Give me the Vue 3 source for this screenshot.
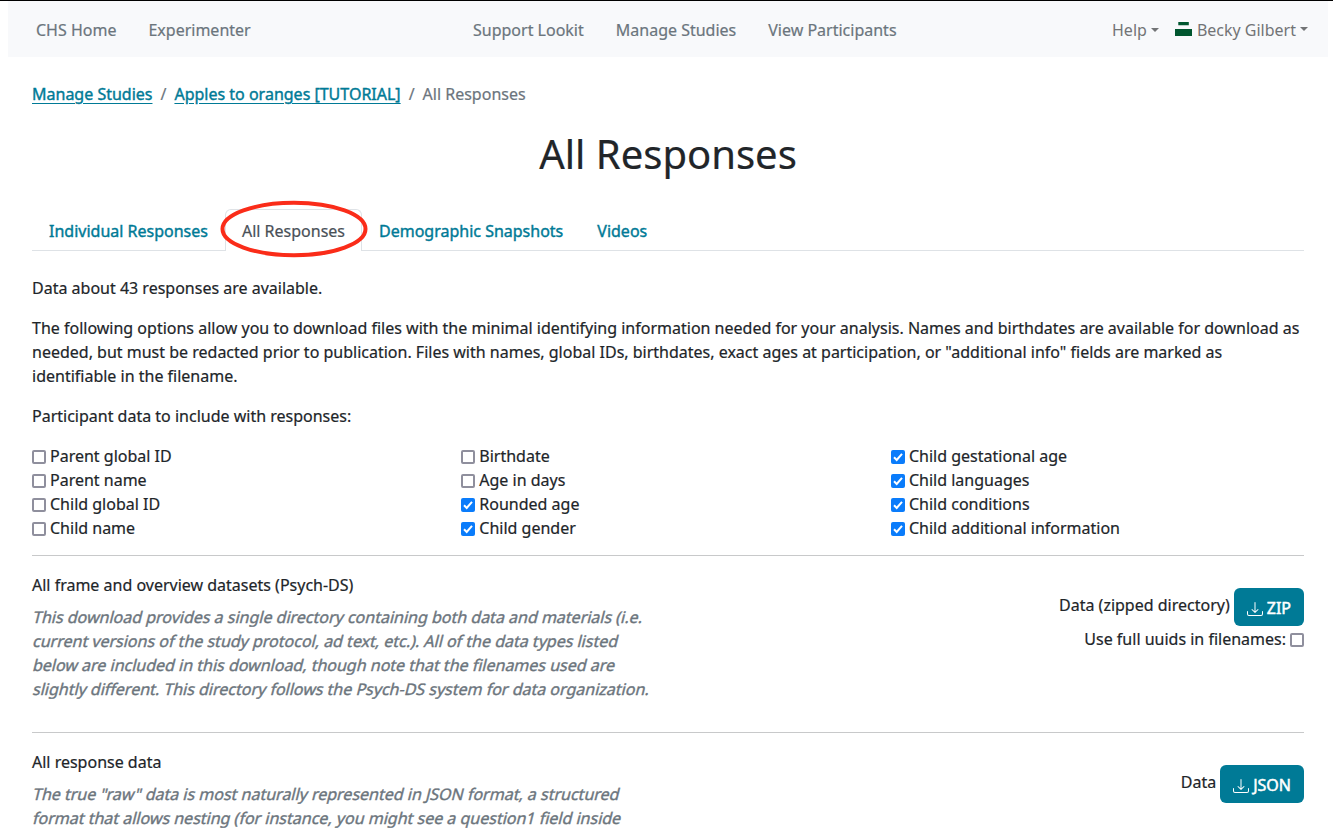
<script setup>
const leftLinks = ['CHS Home', 'Experimenter']
const midLinks = ['Support Lookit', 'Manage Studies', 'View Participants']
const columns = [
  [['Parent global ID', false], ['Parent name', false], ['Child global ID', false], ['Child name', false]],
  [['Birthdate', false], ['Age in days', false], ['Rounded age', true], ['Child gender', true]],
  [['Child gestational age', true], ['Child languages', true], ['Child conditions', true], ['Child additional information', true]],
]
const intro = [
  'The following options allow you to download files with the minimal identifying information needed for your analysis. Names and birthdates are available for download as',
  'needed, but must be redacted prior to publication. Files with names, global IDs, birthdates, exact ages at participation, or "additional info" fields are marked as',
  'identifiable in the filename.',
]
const datasets = [
  {
    title: 'All frame and overview datasets (Psych-DS)',
    lines: [
      'This download provides a single directory containing both data and materials (i.e.',
      'current versions of the study protocol, ad text, etc.). All of the data types listed',
      'below are included in this download, though note that the filenames used are',
      'slightly different. This directory follows the Psych-DS system for data organization.',
    ],
    label: 'Data (zipped directory)',
    button: 'ZIP',
    uuids: true,
  },
  {
    title: 'All response data',
    lines: [
      'The true "raw" data is most naturally represented in JSON format, a structured',
      'format that allows nesting (for instance, you might see a question1 field inside',
    ],
    label: 'Data',
    button: 'JSON',
    uuids: false,
  },
]
</script>

<template>
  <div class="page">
    <nav class="navbar">
      <div class="group left"><a v-for="l in leftLinks" :key="l">{{ l }}</a></div>
      <div class="group mid"><a v-for="l in midLinks" :key="l">{{ l }}</a></div>
      <div class="group right">
        <a>Help<i class="caret"></i></a>
        <a class="user">
          <svg width="17" height="15" viewBox="0 0 17 15"><path fill="#00562f" d="M3.3 0h10.5v3.2H3.3zM0 7h17v7H0z" /></svg>
          Becky Gilbert<i class="caret"></i>
        </a>
      </div>
    </nav>
    <main>
      <div class="crumbs">
        <a>Manage Studies</a><span class="sep">/</span><a>Apples to oranges [TUTORIAL]</a><span class="sep">/</span><span>All Responses</span>
      </div>
      <h1>All Responses</h1>
      <div class="tabs">
        <a class="tab">Individual Responses</a>
        <a class="tab active">
          All Responses
          <svg class="ring" width="148" height="58" viewBox="0 0 148 58"><ellipse cx="74" cy="29" rx="71.5" ry="26.2" fill="none" stroke="#fa2c19" stroke-width="4" /></svg>
        </a>
        <a class="tab">Demographic Snapshots</a>
        <a class="tab">Videos</a>
      </div>
      <p class="count">Data about 43 responses are available.</p>
      <p class="intro"><span v-for="l in intro" :key="l" class="line">{{ l }}</span></p>
      <p class="lead">Participant data to include with responses:</p>
      <div class="options">
        <div v-for="(col, i) in columns" :key="i">
          <label v-for="[name, on] in col" :key="name" class="option">
            <span class="box" :class="{ on }"><svg v-if="on" width="14" height="14" viewBox="0 0 14 14"><path d="M3 7.3 5.7 10 11 3.8" fill="none" stroke="#fff" stroke-width="2" /></svg></span>{{ name }}
          </label>
        </div>
      </div>
      <section v-for="d in datasets" :key="d.title" class="dataset">
        <div>
          <div class="title">{{ d.title }}</div>
          <div class="desc"><span v-for="l in d.lines" :key="l" class="line">{{ l }}</span></div>
        </div>
        <div class="actions">
          <div class="download">
            <span>{{ d.label }}</span>
            <button>
              <svg width="16" height="16" viewBox="0 0 16 16" fill="#fff">
                <path d="M.5 9.9a.5.5 0 0 1 .5.5v2.5a1 1 0 0 0 1 1h12a1 1 0 0 0 1-1v-2.5a.5.5 0 0 1 1 0v2.5a2 2 0 0 1-2 2H2a2 2 0 0 1-2-2v-2.5a.5.5 0 0 1 .5-.5" />
                <path d="M7.646 11.854a.5.5 0 0 0 .708 0l3-3a.5.5 0 0 0-.708-.708L8.5 10.293V1.5a.5.5 0 0 0-1 0v8.793L5.354 8.146a.5.5 0 1 0-.708.708z" />
              </svg>{{ d.button }}
            </button>
          </div>
          <label v-if="d.uuids" class="uuids">Use full uuids in filenames:<span class="box"></span></label>
        </div>
      </section>
    </main>
  </div>
</template>

<style>
body { margin: 0; background: #fff; overflow: hidden; }
</style>

<style scoped>
* { box-sizing: border-box; }
.page {
  height: 831px;
  overflow: hidden;
  border-top: 1px solid #000;
  font: 16px/24px "Noto Sans", sans-serif;
  color: #212529;
  -webkit-text-stroke: 0.2px;
}
.navbar {
  margin: 0 5px 0 8px;
  height: 56px;
  padding: 0 20px 0 28px;
  background: #f8f9fb;
  color: #6b757d;
  display: grid;
  grid-template-columns: 437px 1fr auto;
  align-items: center;
}
.group { display: flex; gap: 32px; white-space: nowrap; position: relative; top: 1px; }
.right { gap: 16px; color: #727476; -webkit-text-stroke: 0; }
.user { display: flex; }
.user svg { margin: 4px 5px 0 0; }
.caret {
  display: inline-block;
  margin-left: 4px;
  vertical-align: 4px;
  border: 4px solid transparent;
  border-top-color: currentColor;
  border-bottom: 0;
}
.user .caret { margin-top: 9px; height: 4px; }
main { padding: 25px 29px 0 32px; }
.crumbs { display: flex; color: #6c757d; white-space: nowrap; }
.crumbs a { color: #007a96; text-decoration: underline; text-underline-offset: 3px; -webkit-text-stroke: 0.4px; }
.sep { padding: 0 8px; }
h1 { margin: 24px 0 31px; font-size: 40px; line-height: 48px; font-weight: 400; text-align: center; }
.tabs { display: flex; height: 42px; border-bottom: 1px solid #dee2e6; white-space: nowrap; }
.tab {
  position: relative;
  height: 42px;
  padding: 9px 16px 0;
  border: 1px solid transparent;
  border-bottom: 0;
  color: #007a96;
  -webkit-text-stroke: 0.4px;
}
.active { background: #fff; color: #495057; border-color: #dee2e6; border-radius: 6px 6px 0 0; -webkit-text-stroke: 0.2px; }
.ring { position: absolute; left: -6px; top: -10px; }
p { margin: 0 0 16px; }
.count { margin-top: 25px; }
.line { display: block; white-space: nowrap; }
.options { display: grid; grid-template-columns: 429.3px 429.7px 1fr; margin-bottom: 15px; }
.option { display: flex; height: 24px; }
.box {
  flex: none;
  display: block;
  width: 14px;
  height: 14px;
  margin: 6px 4px 0 0;
  border: 2px solid #8f8f9d;
  border-radius: 2px;
  background: #fff;
}
.box.on { border: 0; background: #0a7cfb; }
.box svg { display: block; }
.dataset { height: 177px; border-top: 1px solid #c8c9ca; padding-top: 17px; display: flex; justify-content: space-between; }
.desc { margin-top: 8px; color: #6c757d; -webkit-text-stroke: 0.4px; }
.desc .line { transform: skewX(-14deg); transform-origin: 0 75%; }
.actions { padding-top: 15px; }
.download { display: flex; justify-content: flex-end; gap: 4px; line-height: 34px; }
button {
  height: 38px;
  display: flex;
  align-items: center;
  padding: 2px 13px 0;
  border: 0;
  border-radius: 6px;
  background: #007a96;
  color: #fff;
  font: 400 16px/24px "Noto Sans", sans-serif;
  -webkit-text-stroke: 0.5px;
}
button svg { margin: 2px 4px 0 0; }
.uuids { display: flex; justify-content: flex-end; margin-top: 1px; }
.uuids .box { margin: 6px 0 0 4px; }
</style>
